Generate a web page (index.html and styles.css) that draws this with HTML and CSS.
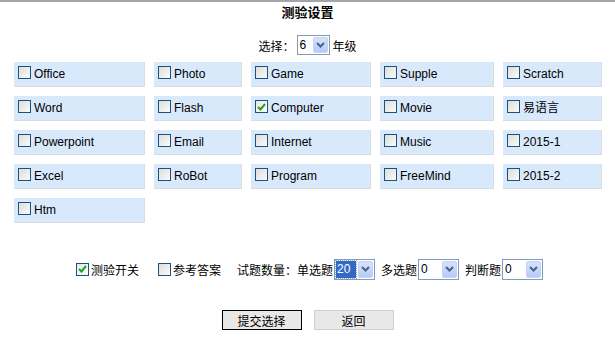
FILE: index.html
```html
<!DOCTYPE html>
<html lang="zh-CN">
<head>
  <meta charset="UTF-8" />
  <title>测验设置</title>
  <link rel="stylesheet" href="styles.css">
</head>
<body>
  <div class="title">测验设置</div>

  <div class="grade">
    <span>选择：</span>
    <span class="combo small"><span class="val">6</span><span class="arrow"><svg width="9" height="6" viewBox="0 0 9 6"><path d="M1 1 L4.5 4.5 L8 1" fill="none" stroke="#4d6185" stroke-width="2"/></svg></span></span>
    <span class="after">年级</span>
  </div>

  <div class="topics">
    <label class="cell"><span class="box"></span>Office</label>
    <label class="cell"><span class="box"></span>Photo</label>
    <label class="cell"><span class="box"></span>Game</label>
    <label class="cell"><span class="box"></span>Supple</label>
    <label class="cell"><span class="box"></span>Scratch</label>

    <label class="cell"><span class="box"></span>Word</label>
    <label class="cell"><span class="box"></span>Flash</label>
    <label class="cell"><span class="box on"><svg width="9" height="8" viewBox="0 0 9 8"><path d="M1 4 L3.5 6.5 L8 1" fill="none" stroke="#21a121" stroke-width="2"/></svg></span>Computer</label>
    <label class="cell"><span class="box"></span>Movie</label>
    <label class="cell"><span class="box"></span>易语言</label>

    <label class="cell"><span class="box"></span>Powerpoint</label>
    <label class="cell"><span class="box"></span>Email</label>
    <label class="cell"><span class="box"></span>Internet</label>
    <label class="cell"><span class="box"></span>Music</label>
    <label class="cell"><span class="box"></span>2015-1</label>

    <label class="cell"><span class="box"></span>Excel</label>
    <label class="cell"><span class="box"></span>RoBot</label>
    <label class="cell"><span class="box"></span>Program</label>
    <label class="cell"><span class="box"></span>FreeMind</label>
    <label class="cell"><span class="box"></span>2015-2</label>

    <label class="cell"><span class="box"></span>Htm</label>
  </div>

  <div class="options">
    <label class="opt first"><span class="box on"><svg width="9" height="8" viewBox="0 0 9 8"><path d="M1 4 L3.5 6.5 L8 1" fill="none" stroke="#21a121" stroke-width="2"/></svg></span>测验开关</label>
    <label class="opt"><span class="box"></span>参考答案</label>
    <span class="count">试题数量：单选题</span>
    <span class="combo"><span class="val sel">20</span><span class="arrow"><svg width="9" height="6" viewBox="0 0 9 6"><path d="M1 1 L4.5 4.5 L8 1" fill="none" stroke="#4d6185" stroke-width="2"/></svg></span></span>
    <span class="count gap">多选题</span>
    <span class="combo"><span class="val">0</span><span class="arrow"><svg width="9" height="6" viewBox="0 0 9 6"><path d="M1 1 L4.5 4.5 L8 1" fill="none" stroke="#4d6185" stroke-width="2"/></svg></span></span>
    <span class="count gap">判断题</span>
    <span class="combo"><span class="val">0</span><span class="arrow"><svg width="9" height="6" viewBox="0 0 9 6"><path d="M1 1 L4.5 4.5 L8 1" fill="none" stroke="#4d6185" stroke-width="2"/></svg></span></span>
  </div>

  <div class="actions">
    <button class="btn main">提交选择</button>
    <button class="btn">返回</button>
  </div>
</body>
</html>
```

FILE: styles.css
```css
html, body {
  margin: 0; padding: 0;
  background: #fff; color: #000;
  font-family: "Liberation Sans", Arial, "Noto Sans CJK SC", sans-serif;
  font-size: 12px;
}
body { border-top: 2px solid #9ea6ae; }

.title {
  text-align: center; font-weight: bold; font-size: 13px;
  line-height: 16px; padding-top: 3px;
}

.grade {
  display: flex; justify-content: center; align-items: center;
  gap: 2px; margin-top: 14px; height: 20px;
}
.grade .after { margin-left: 1px; }

/* fake xp style dropdown */
.combo {
  display: inline-flex; align-items: stretch;
  width: 41px; height: 21px; box-sizing: border-box;
  border: 1px solid #7f9db9; background: #fff;
}
.combo.small { width: 33px; height: 20px; }
.combo .val { flex: 1; padding-left: 2px; line-height: 17px; margin: 1px 0; }
.combo .val.sel {
  flex: none; width: 19px; padding-left: 1px; margin: 1px;
  background: #316ac5; color: #fff; outline: 1px dotted #9ab;
}
.combo .arrow {
  width: 15px; margin: 1px; margin-left: auto; border-radius: 2px;
  background: linear-gradient(#d6e2fd, #b7cbf8);
  border: 1px solid #c3d3f8; box-sizing: border-box;
  display: flex; align-items: center; justify-content: center;
}

.topics {
  display: grid;
  grid-template-columns: 131px 88px 120px 114px 99px;
  grid-auto-rows: 25px;
  gap: 9px;
  margin: 7px 0 0 14px;
}
.cell {
  display: flex; align-items: flex-start;
  background: #d8e9fc;
  border-right: 1px solid #d9dde2; border-bottom: 1px solid #d9dde2;
  box-sizing: border-box; padding: 4px 0 0 4px; line-height: 16px;
}

.box {
  width: 13px; height: 13px; box-sizing: border-box; flex: none;
  border: 1px solid #1c5180; margin-right: 3px;
  background: linear-gradient(135deg, #dcdcd7, #fbfbfa);
  display: inline-flex; align-items: center; justify-content: center;
}
.box.on { background: linear-gradient(135deg, #e6e6e1, #fff); }

.options {
  display: flex; align-items: center; justify-content: center;
  margin-top: 35px; height: 22px; padding-left: 4px;
}
.opt { display: flex; align-items: center; margin-right: 16px; }
.opt.first { margin-right: 19px; }
.opt .box { margin-right: 2px; }
.count { margin-right: 1px; }
.count.gap { margin-left: 6px; }

.actions {
  display: flex; justify-content: center; gap: 12px;
  margin-top: 30px;
}
.btn {
  width: 80px; height: 20px; padding: 0;
  font: 12px "Liberation Sans", Arial, "Noto Sans CJK SC", sans-serif;
  background: #e8e8e8; border: 1px solid #d0d0d0; color: #000;
}
.btn.main { border-color: #000; }
```
